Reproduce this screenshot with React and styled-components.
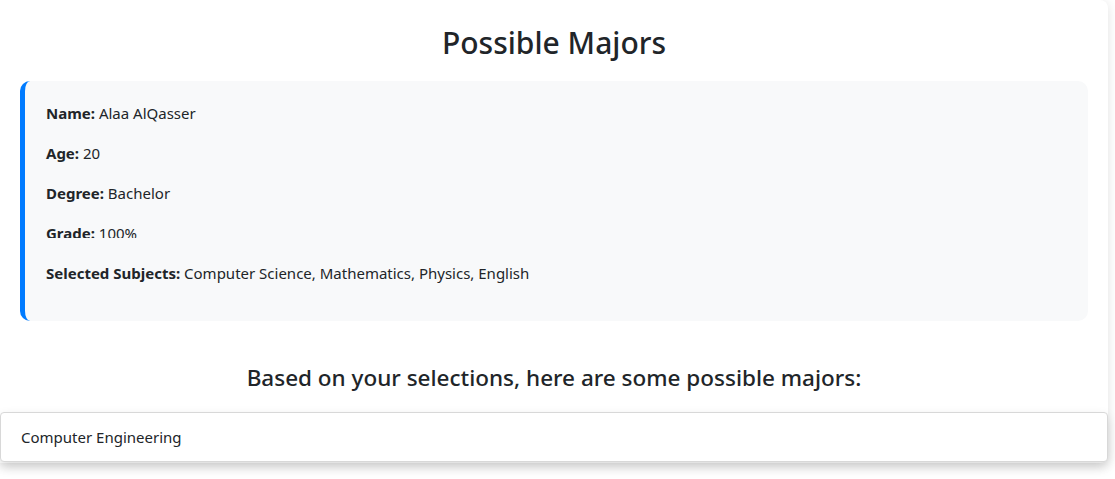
import styled, { createGlobalStyle } from "styled-components";

const GlobalStyle = createGlobalStyle`
  body {
    margin: 0;
    background: #fff;
    font-family: "Noto Sans", "Open Sans", sans-serif;
    color: #212529;
  }
`;

const Page = styled.div`
  padding: 0 7px 16px 0;
`;

const Card = styled.div`
  width: 1108px;
  box-sizing: border-box;
  background: #fff;
  border-radius: 0 8px 8px 0;
  box-shadow: 0 2px 12px rgba(0, 0, 0, 0.12);
  padding: 24px 20px 1px 20px;
`;

const Title = styled.h1`
  margin: 0 0 20px;
  text-align: center;
  font-size: 30px;
  font-weight: 500;
  line-height: 37px;
`;

const InfoBox = styled.div`
  background: #f8f9fa;
  border-left: 5px solid #007bff;
  border-radius: 10px;
  padding: 20px 21px;
  margin-bottom: 43px;
`;

const Field = styled.p`
  margin: 0 0 16px;
  font-size: 15px;
  line-height: 24px;
  ${(p) =>
    p.$clipped &&
    `
    height: 17px;
    overflow: hidden;
    margin-bottom: 23px;
  `}
`;

const Label = styled.strong`
  font-weight: 700;
`;

const SubTitle = styled.h3`
  margin: 0 0 20px;
  text-align: center;
  font-size: 22.5px;
  font-weight: 500;
  line-height: 28px;
`;

const MajorList = styled.ul`
  list-style: none;
  margin: 0 -20px;
  padding: 0;
`;

const MajorItem = styled.li`
  border: 1px solid #d8d8d8;
  border-radius: 4px;
  background: #fff;
  padding: 12px 20px;
  font-size: 15px;
  line-height: 24px;
  box-shadow: 0 5px 12px rgba(0, 0, 0, 0.14);
`;

const student = [
  { label: "Name:", value: "Alaa AlQasser" },
  { label: "Age:", value: "20" },
  { label: "Degree:", value: "Bachelor" },
  { label: "Grade:", value: "100%", clipped: true },
  {
    label: "Selected Subjects:",
    value: "Computer Science, Mathematics, Physics, English",
  },
];

const majors = ["Computer Engineering"];

export default function App() {
  return (
    <Page>
      <GlobalStyle />
      <Card>
        <Title>Possible Majors</Title>
        <InfoBox>
          {student.map((f) => (
            <Field key={f.label} $clipped={f.clipped}>
              <Label>{f.label}</Label> {f.value}
            </Field>
          ))}
        </InfoBox>
        <SubTitle>Based on your selections, here are some possible majors:</SubTitle>
        <MajorList>
          {majors.map((m) => (
            <MajorItem key={m}>{m}</MajorItem>
          ))}
        </MajorList>
      </Card>
    </Page>
  );
}
